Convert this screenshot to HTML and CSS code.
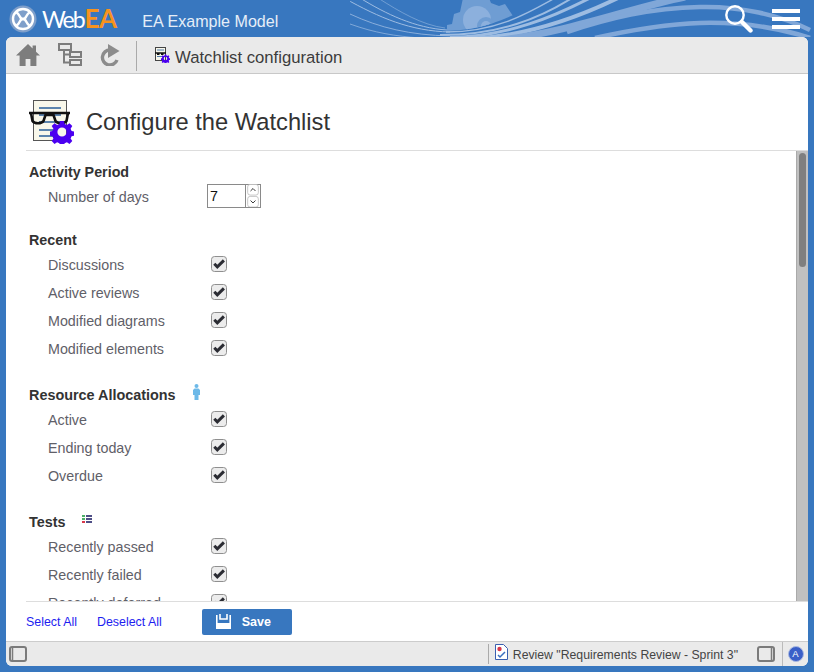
FILE: index.html
```html
<!DOCTYPE html>
<html lang="en">
<head>
<meta charset="utf-8">
<title>WebEA</title>
<link rel="stylesheet" href="styles.css">
</head>
<body>
<svg class="defs" width="0" height="0" aria-hidden="true">
  <defs>
    <symbol id="tick" viewBox="0 0 16 16">
      <rect x="0.5" y="0.5" width="15" height="15" rx="3" fill="#ececec" stroke="#8f8f8f"/>
      <path d="M3.300 7.800 L6.300 10.800 L12.900 4.400" fill="none" stroke="#2b2c33" stroke-width="3"/>
    </symbol>
    <symbol id="gear" viewBox="0 0 24 24">
      <path fill-rule="evenodd" fill="#4b00f0" d="M10 1h4l.6 3 2.300 1 2.600-1.700 2.800 2.800-1.700 2.600 1 2.300 3 .6v4l-3 .6-1 2.300 1.700 2.600-2.800 2.800-2.600-1.700-2.300 1-.6 3h-4l-.6-3-2.300-1-2.600 1.700-2.800-2.800 1.700-2.600-1-2.300-3-.6v-4l3-.6 1-2.300L1.700 6.100l2.800-2.800 2.600 1.700 2.300-1zM12 7.400a4.600 4.600 0 1 0 0 9.200A4.600 4.600 0 0 0 12 7.400z"/>
    </symbol>
  </defs>
</svg>
<div class="app">
  <header class="topbar">
    <svg class="waves" viewBox="0 0 464 37" width="464" height="37" aria-hidden="true">
      <defs>
        <clipPath id="gear-clip"><path d="M90 0H170V12C140 26 120 31 90 31z"/></clipPath>
      </defs>
      <g clip-path="url(#gear-clip)">
        <path fill="#6f9dd3" d="M113 -2h26l2 5 8 3 6-2 8 12-5 5 1 8 6 6-8 10H103l-6-8v-12l5-1 2-10 6-2z"/>
        <circle cx="127" cy="20" r="14" fill="#8cb0dd"/>
        <circle cx="136" cy="26" r="9" fill="#6f9dd3"/>
        <circle cx="136" cy="26" r="5" fill="#8cb0dd"/>
      </g>
      <g fill="none" stroke="#9dbce2">
        <path d="M-6 -2C30 18 60 31 100 32" stroke-width="1"/>
        <path d="M10 -2C36 14 65 28 97 30" stroke-width="1"/>
        <path d="M28 -2C50 12 72 25 95 28" stroke-width=".8" opacity=".7"/>
        <path d="M0 14C30 28 60 35 100 36" stroke-width="1" opacity=".8"/>
        <path d="M0 24C25 33 45 36 70 38" stroke-width="1" opacity=".7"/>
        <path d="M96 32C145 32 175 15 205 -2" stroke-width="1.400"/>
        <path d="M90 35C150 35 190 18 222 -2" stroke-width="2"/>
        <path d="M100 37.500C160 36 205 16 240 -2" stroke-width="3"/>
        <path d="M120 39C180 36 235 14 268 -2" stroke-width="4"/>
      </g>
      <g fill="none" stroke="#80a7d8">
        <path d="M150 40C220 32 280 8 335 -3" stroke-width="7"/>
        <path d="M217 32C260 18 300 8 350 7C390 6 430 15 460 30" stroke-width="4.500"/>
        <path d="M245 38C290 28 320 24 350 23C390 22 430 28 460 38" stroke-width="4.500"/>
      </g>
    </svg>
    <svg class="logo-mark" viewBox="0 0 28 28" width="28" height="28" aria-hidden="true">
      <circle cx="14" cy="14" r="13.500" fill="#7f9fca"/>
      <g fill="none" stroke="#fff" stroke-width="2.400">
        <circle cx="14" cy="14" r="10"/>
        <path d="M7 7C12 10 10 14 14 14C18 14 16 18 21 21"/>
        <path d="M21 7C16 10 18 14 14 14C10 14 12 18 7 21"/>
      </g>
    </svg>
    <div class="logo-text">Web<span class="logo-ea">EA</span></div>
    <div class="model-name">EA Example Model</div>
    <div class="top-actions">
      <svg class="search-icon" viewBox="0 0 28 30" width="28" height="30" aria-hidden="true">
        <circle cx="10" cy="11" r="8.700" fill="none" stroke="#fff" stroke-width="2.400"/>
        <path d="M17 18l8.500 8.500" stroke="#fff" stroke-width="4.400" stroke-linecap="round"/>
      </svg>
      <div class="hamburger"><span></span><span></span><span></span></div>
    </div>
  </header>

  <main class="panel">
    <nav class="toolbar">
      <svg class="tool" viewBox="0 0 24 22" width="24" height="22" aria-hidden="true">
        <path fill="#7d7d7d" d="M12 0 0 11.500h3.600V22h6v-7h4.800v7h6V11.500H24l-4-3.800V1.500h-3.400v3z"/>
      </svg>
      <svg class="tool" viewBox="0 0 24 24" width="24" height="24" aria-hidden="true">
        <g fill="none" stroke="#7d7d7d" stroke-width="2">
          <rect x="1" y="1" width="12" height="6"/>
          <rect x="12" y="9" width="11" height="5"/>
          <rect x="12" y="17" width="11" height="5"/>
          <path d="M6 7v12.500h6M6 11.500h6"/>
        </g>
      </svg>
      <svg class="tool" viewBox="0 0 20 22" width="20" height="22" aria-hidden="true">
        <path fill="none" stroke="#8c8c8c" stroke-width="3.400" d="M17 16A7.500 7.500 0 1 1 10 6"/>
        <path fill="#8c8c8c" d="M8 0 19.500 7 8 14z"/>
      </svg>
      <div class="tool-sep"></div>
      <svg class="crumb-icon" viewBox="0 0 15 16" width="15" height="16" aria-hidden="true">
        <rect x=".5" y=".5" width="10" height="13" fill="#f7f6ea" stroke="#444"/>
        <path d="M2 3h7M2 9.500h7" stroke="#4f7aa8"/>
        <path d="M0 6h11" stroke="#111" stroke-width="1.500"/>
        <rect x="2" y="6" width="2.500" height="2" fill="#111"/>
        <rect x="6" y="6" width="2.500" height="2" fill="#111"/>
        <use href="#gear" x="6" y="7" width="9" height="9"/>
      </svg>
      <div class="crumb-text">Watchlist configuration</div>
    </nav>

    <div class="title-row">
      <svg class="title-icon" viewBox="0 0 46 44" width="46" height="44" aria-hidden="true">
        <rect x="5.500" y=".5" width="33" height="40" fill="#f8f7ea" stroke="#555"/>
        <g stroke="#5c84ad" stroke-width="2">
          <path d="M11 8h22M11 15h22M11 22h22M11 30h14M11 36h14"/>
        </g>
        <path d="M1 13h41" stroke="#111" stroke-width="2.600"/>
        <path d="M3 13l1.500 8c2 3 9 3 11 0l2-6h8l2 6c2 3 9 3 11 0l1.500-8" fill="none" stroke="#111" stroke-width="2.600"/>
        <use href="#gear" x="22" y="20" width="24" height="24"/>
      </svg>
      <h1 class="title">Configure the Watchlist</h1>
    </div>

    <div class="scroll-area">
      <div class="form">
        <section class="group group-first">
          <h2 class="group-title">Activity Period</h2>
          <div class="row">
            <span class="row-label">Number of days</span>
            <div class="spinner">
              <span class="spin-value">7</span>
              <div class="spin-buttons">
                <svg class="spin-btn" viewBox="0 0 14 14" width="14" height="14" aria-hidden="true"><rect x=".5" y=".5" width="13" height="13" rx="3" fill="#fff" stroke="#bbb"/><path d="M4 8.500l3-3 3 3" fill="none" stroke="#333" stroke-width="1.200"/></svg>
                <svg class="spin-btn" viewBox="0 0 14 14" width="14" height="14" aria-hidden="true"><rect x=".5" y=".5" width="13" height="13" rx="3" fill="#fff" stroke="#bbb"/><path d="M4 5.500l3 3 3-3" fill="none" stroke="#333" stroke-width="1.200"/></svg>
              </div>
            </div>
          </div>
        </section>

        <section class="group">
          <h2 class="group-title">Recent</h2>
          <div class="row"><span class="row-label">Discussions</span><svg class="check"><use href="#tick"/></svg></div>
          <div class="row"><span class="row-label">Active reviews</span><svg class="check"><use href="#tick"/></svg></div>
          <div class="row"><span class="row-label">Modified diagrams</span><svg class="check"><use href="#tick"/></svg></div>
          <div class="row"><span class="row-label">Modified elements</span><svg class="check"><use href="#tick"/></svg></div>
        </section>

        <section class="group group-wide">
          <h2 class="group-title title-tall">Resource Allocations
            <svg class="person" viewBox="0 0 7 16" width="7" height="16" aria-hidden="true">
              <circle cx="3.500" cy="2" r="2" fill="#6db9e8"/>
              <path fill="#6db9e8" d="M1.500 4.500h4L7 6v5H5.500v5h-4v-5H0V6z"/>
            </svg>
          </h2>
          <div class="row"><span class="row-label">Active</span><svg class="check"><use href="#tick"/></svg></div>
          <div class="row"><span class="row-label">Ending today</span><svg class="check"><use href="#tick"/></svg></div>
          <div class="row"><span class="row-label">Overdue</span><svg class="check"><use href="#tick"/></svg></div>
        </section>

        <section class="group group-wide">
          <h2 class="group-title title-tall title-low">Tests
            <svg class="list-icon" viewBox="0 0 10 8" width="10" height="8" aria-hidden="true">
              <rect x="0" y="0" width="3" height="2" fill="#4caf68"/>
              <rect x="0" y="3" width="3" height="2" fill="#4caf68"/>
              <rect x="0" y="6" width="3" height="2" fill="#d8384a"/>
              <rect x="4" y="0" width="6" height="2" fill="#4e4e86"/>
              <rect x="4" y="3" width="6" height="2" fill="#4e4e86"/>
              <rect x="4" y="6" width="6" height="2" fill="#4e4e86"/>
            </svg>
          </h2>
          <div class="row"><span class="row-label">Recently passed</span><svg class="check"><use href="#tick"/></svg></div>
          <div class="row"><span class="row-label">Recently failed</span><svg class="check"><use href="#tick"/></svg></div>
          <div class="row"><span class="row-label">Recently deferred</span><svg class="check"><use href="#tick"/></svg></div>
        </section>
      </div>
      <div class="scrollbar"><div class="scroll-thumb"></div></div>
    </div>

    <div class="action-bar">
      <a class="action-link">Select All</a>
      <a class="action-link">Deselect All</a>
      <button class="save-btn" type="button">
        <svg viewBox="0 0 15 15" width="15" height="15" aria-hidden="true">
          <path fill="none" stroke="#fff" stroke-width="1.600" d="M.8 1v13.200h13.400V1"/>
          <path fill="none" stroke="#fff" stroke-width="1.600" d="M4 0v5h7V0"/>
          <path fill="#fff" d="M1 9h13v5.500H1z"/>
        </svg>
        <span>Save</span>
      </button>
    </div>

    <footer class="statusbar">
      <svg class="status-panel" viewBox="0 0 18 16" width="18" height="16" aria-hidden="true">
        <rect x="1" y="1" width="16" height="14" rx="2" fill="none" stroke="#7b7b7b" stroke-width="2"/>
        <path d="M3.500 1v14" stroke="#7b7b7b" stroke-width="1.500"/>
      </svg>
      <div class="status-sep"></div>
      <svg class="review-icon" viewBox="0 0 13 16" width="13" height="16" aria-hidden="true">
        <path d="M.5.500h8l4 4v11H.5z" fill="#fff" stroke="#3a5fb0"/>
        <circle cx="4.500" cy="5" r="2.200" fill="#d8384a"/>
        <path d="M3 11l2 2 5-5" fill="none" stroke="#3a6fc0" stroke-width="1.500"/>
      </svg>
      <span class="review-text">Review "Requirements Review - Sprint 3"</span>
      <svg class="status-panel-r" viewBox="0 0 18 16" width="18" height="16" aria-hidden="true">
        <rect x="1" y="1" width="16" height="14" rx="2" fill="none" stroke="#7b7b7b" stroke-width="2"/>
        <path d="M14.500 1v14" stroke="#7b7b7b" stroke-width="1.500"/>
      </svg>
      <div class="status-avatar"><span class="avatar-disc">A</span></div>
    </footer>
  </main>
</div>
</body>
</html>
```

FILE: styles.css
```css
* { box-sizing: border-box; }
html, body { margin: 0; height: 100%; }
body { background: #3877bf; font-family: "Liberation Sans", Arial, sans-serif; overflow: hidden; }
.defs { position: absolute; }
.app { height: 672px; display: flex; flex-direction: column; padding: 0 6px 6px; }

.topbar { position: relative; height: 37px; flex: none; display: flex; align-items: center; margin: 0 -6px; padding: 0 14px 0 9px; overflow: hidden; }
.waves { position: absolute; left: 350px; top: 0; }
.logo-mark { flex: none; position: relative; }
.logo-text { position: relative; font-family: Lato, sans-serif; font-size: 23px; font-weight: 400; color: #fff; margin-left: 5px; letter-spacing: -2px; line-height: 37px; }
.logo-ea { color: #f7931e; font-size: 26px; font-weight: 700; letter-spacing: -0.6px; margin-left: 1px; }
.model-name { position: relative; color: #e6eef8; font-size: 16.100px; margin: 6px 0 0 26px; }
.top-actions { position: relative; margin-left: auto; display: flex; align-items: center; gap: 19px; }
.hamburger { width: 28px; display: flex; flex-direction: column; gap: 4px; }
.hamburger span { height: 4px; background: #fff; }

.panel { flex: 1; min-height: 0; background: #fff; border-radius: 6px; overflow: hidden; display: flex; flex-direction: column; }
.toolbar { height: 37px; flex: none; background: #eaeaea; border-bottom: 1px solid #c8c8c8; display: flex; align-items: center; padding-left: 10px; }
.tool { flex: none; margin-right: 18px; }
.tool-sep { width: 1px; height: 30px; background: #aaa; margin: 2px 0 0 -2px; }
.crumb-icon { margin-left: 18px; }
.crumb-text { font-size: 16.700px; color: #3c3c3c; margin: 6px 0 0 5px; }

.title-row { height: 76px; flex: none; display: flex; align-items: center; padding: 19px 0 0 22px; }
.title { margin: 2px 0 0 12px; font-size: 23.700px; font-weight: 400; color: #333; }

.scroll-area { flex: 1; min-height: 0; display: flex; margin-left: 20px; border-top: 1px solid #ddd; border-bottom: 1px solid #ddd; }
.form { flex: 1; overflow: hidden; padding-left: 3px; }
.scrollbar { width: 12px; flex: none; background: #c0c0c0; border-left: 1px solid #aaa; padding: 2px 2px 0 2px; }
.scroll-thumb { height: 114px; background: #7f7f7f; border-radius: 4px; }

.group { margin-top: 19px; }
.group-first { margin-top: 11px; }
.group-wide { margin-top: 21px; }
.group-title { margin: 0; height: 21px; line-height: 21px; font-size: 14.300px; font-weight: 700; color: #333; }
.title-tall { height: 22px; font-size: 14.400px; }
.title-low { padding-top: 1px; }
.row { height: 28px; display: flex; align-items: center; padding-left: 19px; font-size: 14.300px; color: #5f6068; }
.row-label { width: 163px; flex: none; }
.check { width: 16px; height: 16px; flex: none; margin: -2px 0 0 0; }

.person { margin-left: 13px; vertical-align: 0; }
.list-icon { margin-left: 12px; vertical-align: 4px; }

.spinner { display: flex; margin: -2px 0 0 -4px; width: 54px; height: 24px; border: 1px solid #8a8a8a; background: #fff; }
.spin-value { flex: 1; font-size: 14.300px; color: #111; line-height: 22px; padding-left: 2px; border-right: 1px solid #8a8a8a; }
.spin-buttons { width: 14px; flex: none; margin-top: -1px; display: flex; flex-direction: column; }
.spin-btn { display: block; }

.action-bar { height: 39px; flex: none; display: flex; align-items: center; padding-left: 20px; font-size: 12.400px; }
.action-link { color: #1d1df0; margin-right: 20px; }
.save-btn { margin-left: 20px; width: 90px; height: 26px; background: #3877bf; border: 0; border-radius: 2px; color: #fff; font: 700 12.500px "Liberation Sans", sans-serif; display: flex; align-items: center; padding: 0 0 0 14px; gap: 11px; }

.statusbar { height: 25px; flex: none; background: #eaeaea; border-top: 1px solid #ccc; display: flex; align-items: center; padding-left: 3px; }
.status-panel { flex: none; }
.status-sep { width: 1px; height: 20px; background: #aaa; margin-left: auto; }
.review-icon { flex: none; margin: -4px 0 0 6px; }
.review-text { font-size: 12.250px; color: #444; margin: 2px 0 0 5px; }
.status-panel-r { flex: none; margin: 0 7px 0 19px; }
.status-avatar { width: 26px; height: 100%; border-left: 1px solid #bbb; display: flex; align-items: center; justify-content: center; }
.avatar-disc { width: 16px; height: 16px; border-radius: 50%; background: #3a5fc8; border: 1px solid #a8b8e0; color: #fff; font-size: 9.500px; line-height: 14px; text-align: center; }
```
